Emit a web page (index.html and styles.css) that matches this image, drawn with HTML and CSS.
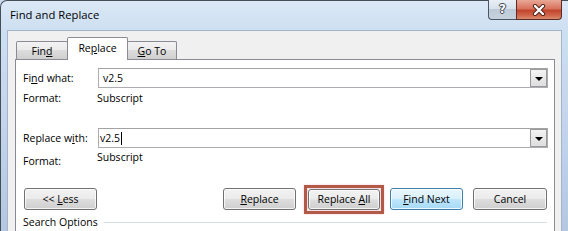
FILE: index.html
```html
<!DOCTYPE html>
<html>
<head>
<meta charset="utf-8">
<link rel="stylesheet" href="styles.css">
</head>
<body>
<div class="window">
  <div class="titlebar">
    <span class="title">Find and Replace</span>
    <div class="caption">
      <span class="cap help">?</span>
      <span class="cap close">
        <svg width="14" height="12" viewBox="0 0 14 12">
          <path d="M3 2 L11 10 M11 2 L3 10" stroke="#4a2018" stroke-width="4.2" stroke-linecap="round" fill="none"/>
          <path d="M3 2 L11 10 M11 2 L3 10" stroke="#ffffff" stroke-width="2.4" stroke-linecap="round" fill="none"/>
        </svg>
      </span>
    </div>
  </div>
  <div class="client">
    <div class="tabs">
      <div class="tab">Fin<u>d</u></div>
      <div class="tab active">Re<u>p</u>lace</div>
      <div class="tab"><u>G</u>o To</div>
    </div>
    <div class="panel">
      <div class="field first">
        <span class="label">Fi<u>n</u>d what:</span>
        <div class="combo"><span class="value">v2.5</span><span class="drop"></span></div>
      </div>
      <div class="fmt first-fmt">
        <span class="label">Format:</span><span class="fmt-value">Subscript</span>
      </div>
      <div class="field second">
        <span class="label">Replace w<u>i</u>th:</span>
        <div class="combo"><span class="value tight">v2.5<span class="caret"></span></span><span class="drop"></span></div>
      </div>
      <div class="fmt second-fmt">
        <span class="label low">Format:</span><span class="fmt-value">Subscript</span>
      </div>
      <div class="buttons">
        <button class="btn less">&lt;&lt; <u>L</u>ess</button>
        <div class="right-group">
          <button class="btn b-replace"><u>R</u>eplace</button>
          <div class="highlight"><button class="btn inner">Replace <u>A</u>ll</button></div>
          <button class="btn default b-find"><u>F</u>ind Next</button>
          <button class="btn b-cancel">Cancel</button>
        </div>
      </div>
      <div class="options">
        <span>Search Options</span><span class="rule"></span>
      </div>
    </div>
  </div>
</div>
</body>
</html>
```

FILE: styles.css
```css
html, body {
  margin: 0;
  padding: 0;
}
body {
  width: 568px;
  height: 231px;
  overflow: hidden;
  font-family: "Open Sans", "Noto Sans", sans-serif;
  font-size: 10.5px;
  color: #000;
  background: #c9daef;
}
u { text-decoration: underline; text-underline-offset: 1px; }

.window {
  box-sizing: border-box;
  width: 568px;
  height: 240px;
  border-top: 1px solid #454d57;
  border-left: 1px solid #454d57;
  border-top-left-radius: 7px;
  background: linear-gradient(to bottom, #dbe8f6 0px, #cddff2 30px, #c3d4ec 120px, #b5c6e2 231px);
  display: flex;
  flex-direction: column;
}

.titlebar {
  height: 29px;
  display: flex;
  align-items: flex-start;
  flex-shrink: 0;
}
.title {
  font-size: 11.25px;
  line-height: 16px;
  margin-top: 6px;
  margin-left: 9px;
  color: #000;
}
.caption {
  margin-left: auto;
  margin-right: 6px;
  margin-top: -1px;
  display: flex;
}
.cap {
  box-sizing: border-box;
  height: 20px;
  display: flex;
  align-items: center;
  justify-content: center;
  border-bottom: 1px solid #4c5561;
}
.help {
  width: 28px;
  border-left: 1px solid #4c5561;
  border-bottom-left-radius: 4px;
  background: linear-gradient(to bottom, #e9eff6 0%, #d8e1ec 45%, #bfcad8 50%, #c7d2df 100%);
  color: #fff;
  font-family: "DejaVu Sans", sans-serif;
  font-weight: bold;
  font-size: 12px;
  line-height: 1;
  text-shadow: 1px 0 0 #3a4450, -1px 0 0 #3a4450, 0 1px 0 #3a4450, 0 -1px 0 #3a4450;
  padding-bottom: 1px;
}
.close {
  width: 46px;
  border-left: 1px solid #5a2c22;
  border-right: 1px solid #5a2c22;
  border-bottom-color: #5a2c22;
  border-bottom-right-radius: 4px;
  background: linear-gradient(to bottom, #e9a896 0%, #d8735d 45%, #c2452c 55%, #cf6449 80%, #d98a6f 100%);
}

.client {
  flex: 1;
  margin-left: 6px;
  margin-right: 6px;
  border: 1px solid #a3b5cb;
  border-bottom: none;
  background: #f0f0f0;
  display: flex;
  flex-direction: column;
}

.tabs {
  display: flex;
  align-items: flex-end;
  height: 22px;
  margin-top: 6px;
  margin-left: 8px;
  position: relative;
  z-index: 1;
}
.tab {
  box-sizing: border-box;
  height: 18px;
  border: 1px solid #898c95;
  border-bottom: none;
  border-radius: 2px 2px 0 0;
  background: linear-gradient(to bottom, #f3f3f3 0%, #ebebeb 45%, #dddddd 50%, #cfcfcf 100%);
  display: flex;
  align-items: center;
  justify-content: center;
  line-height: 14px;
  padding-top: 1px;
}
.tab:nth-child(1) { width: 52px; }
.tab:nth-child(3) { width: 50px; margin-left: -1px; }
.tab.active {
  width: 61px;
  height: 23px;
  margin-left: -1px;
  margin-bottom: -1px;
  background: #fff;
  padding-top: 0;
  padding-bottom: 2px;
}

.panel {
  flex: 1;
  margin-left: 7px;
  margin-right: 6px;
  border: 1px solid #898c95;
  border-bottom: none;
  background: #fff;
  padding: 0 6px 0 7px;
  display: flex;
  flex-direction: column;
}

.field {
  display: flex;
  align-items: center;
  height: 20px;
}
.field.first { margin-top: 8px; }
.field.second { margin-top: 23px; }
.field .label {
  width: 75px;
  flex-shrink: 0;
}
.combo {
  box-sizing: border-box;
  flex: 1;
  height: 20px;
  border: 1px solid #abadb3;
  border-top-color: #a3a3a3;
  background: #fff;
  display: flex;
  align-items: center;
}
.combo .value {
  flex: 1;
  padding-left: 4px;
  display: flex;
  align-items: center;
}
.combo .value.tight { padding-left: 1px; }
.caret {
  width: 1px;
  height: 13px;
  background: #000;
  margin-left: 1px;
}
.drop {
  box-sizing: border-box;
  width: 17px;
  height: 18px;
  border: 1px solid #9a9a9a;
  background: linear-gradient(to bottom, #f4f4f4, #dedede);
  display: flex;
  align-items: center;
  justify-content: center;
}
.drop::after {
  content: "";
  width: 0;
  height: 0;
  border-left: 4px solid transparent;
  border-right: 4px solid transparent;
  border-top: 4px solid #000;
  margin-top: 1px;
}

.fmt {
  display: flex;
  align-items: flex-start;
  line-height: 14px;
}
.fmt .label { width: 74px; flex-shrink: 0; }
.first-fmt { margin-top: 3px; height: 14px; }
.second-fmt { margin-top: 2px; height: 18px; }
.fmt .label.low { padding-top: 4px; }

.buttons {
  display: flex;
  margin-top: 20px;
  height: 22px;
  align-items: center;
}
.right-group {
  margin-left: auto;
  margin-right: 1px;
  display: flex;
  align-items: center;
}
.btn {
  box-sizing: border-box;
  height: 22px;
  width: 73px;
  border: 1px solid #707070;
  border-radius: 3px;
  background: linear-gradient(to bottom, #f2f2f2 0%, #ebebeb 48%, #dddddd 52%, #cfcfcf 100%);
  box-shadow: inset 0 0 0 1px rgba(255,255,255,0.75);
  font-family: "Open Sans", "Noto Sans", sans-serif;
  font-size: 10.5px;
  color: #000;
  padding: 0;
  line-height: 14px;
}
.btn.less { margin-left: 1px; }
.btn.default {
  border-color: #3c7fb1;
  background: linear-gradient(to bottom, #eaf6fd 0%, #d9f0fc 48%, #bee6fd 52%, #a7d9f5 100%);
  box-shadow: inset 0 0 0 1px rgba(255,255,255,0.8);
}
.b-replace { margin-right: 8px; }
.highlight {
  box-sizing: border-box;
  width: 80px;
  height: 29px;
  border: 3px solid #b05a47;
  box-shadow: 0 0 2px #f3c8d0, inset 0 0 0 1px #f6dfe6;
  display: flex;
  align-items: center;
  justify-content: center;
  margin-right: 6px;
}
.btn.inner { width: 72px; height: 21px; }
.b-find { margin-right: 10px; }
.b-cancel { width: 74px; }

.options {
  display: flex;
  align-items: center;
  margin-top: 5px;
  height: 14px;
  line-height: 14px;
}
.rule {
  flex: 1;
  height: 1px;
  background: #d5dfe5;
  margin-left: 6px;
  margin-right: 1px;
}
```
